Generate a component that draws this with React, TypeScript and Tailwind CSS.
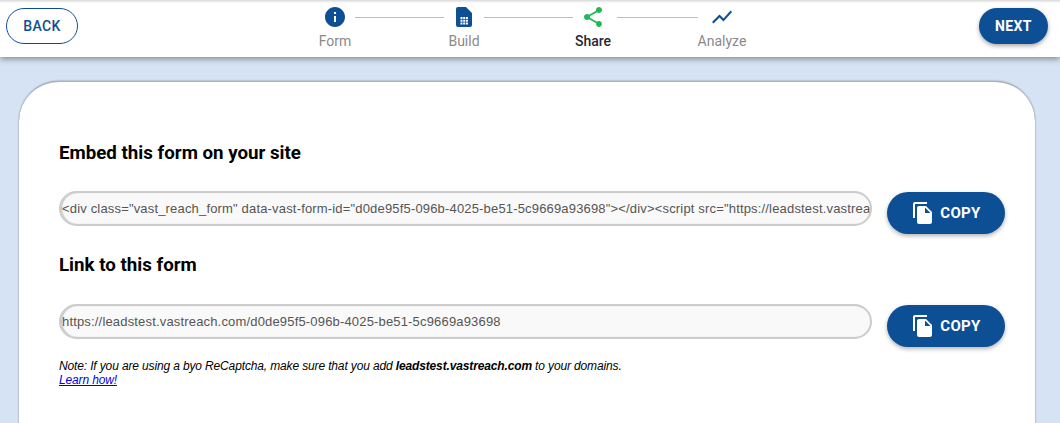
import React from 'react';
import { MdInfo, MdShare, MdShowChart, MdFileCopy } from 'react-icons/md';

const BuildIcon = () => (
  <svg width="24" height="24" viewBox="0 0 24 24" fill="#0d4f95">
    <path
      fillRule="evenodd"
      d="M6 2h8l6 6v12a2 2 0 0 1-2 2H6a2 2 0 0 1-2-2V4a2 2 0 0 1 2-2zM8.5 12v2h2v-2zM11.2 12v2h2v-2zM13.9 12v2h2v-2zM8.5 14.7v2h2v-2zM11.2 14.7v2h2v-2zM13.9 14.7v2h2v-2zM8.5 17.4v2h2v-2zM11.2 17.4v2h2v-2zM13.9 17.4v2h2v-2z"
    />
  </svg>
);

const Connector = ({ className }: { className: string }) => (
  <div className={`h-px bg-[#bdbdbd] ${className}`}></div>
);

const steps = [
  { label: 'Form', active: false },
  { label: 'Build', active: false },
  { label: 'Share', active: true },
  { label: 'Analyze', active: false },
];

function CopyRow({ value }: { value: string }) {
  return (
    <div className="flex items-start">
      <input
        readOnly
        value={value}
        className="w-[813px] h-[35px] rounded-[18px] border-2 border-[#cccccc] bg-[#f9f9f9] pl-[1px] pr-0 text-[13px] tracking-[0.17px] text-[#555555] outline-none shadow-[inset_1px_0_1px_rgba(0,0,0,0.25)] font-['Liberation_Sans',sans-serif]"
      />
      <button className="ml-[15px] mt-[1px] w-[118px] h-[42px] rounded-[21px] bg-[#0d4f95] text-white flex items-center justify-center gap-[5px] text-[15px] font-bold tracking-[0.3px] shadow-[0_2px_4px_rgba(0,0,0,0.3)]">
        <MdFileCopy size={24} />
        COPY
      </button>
    </div>
  );
}

export default function App() {
  return (
    <div className="h-[423px] overflow-hidden bg-[#d5e3f5] font-['Roboto',sans-serif]">
      {/* Header */}
      <div className="h-[57px] bg-white flex items-start justify-between pl-[6px] pr-[12px] pt-[8px] shadow-[0_2px_6px_rgba(0,0,0,0.4),inset_0_3px_3px_-2px_rgba(0,0,0,0.2)]">
        <button className="w-[72px] h-[36px] rounded-[18px] border border-[#0d4f95] text-[#0d4f95] text-[14px] font-medium tracking-[0.4px]">
          BACK
        </button>

        <div className="w-[516px] -mt-[3px]">
          <div className="flex items-center px-[52px]">
            <MdInfo size={24} className="text-[#0d4f95] shrink-0" />
            <Connector className="w-[89px] ml-[8px] mr-[8px]" />
            <BuildIcon />
            <Connector className="w-[89px] ml-[8px] mr-[8px]" />
            <MdShare size={24} className="text-[#1db954] shrink-0" />
            <Connector className="w-[81px] ml-[12px] mr-[12px]" />
            <MdShowChart size={24} className="text-[#0d4f95] shrink-0" />
          </div>
          <div className="grid grid-cols-4 mt-[2px] text-center text-[14px] leading-[20px]">
            {steps.map((step) => (
              <span key={step.label} className={step.active ? 'font-medium text-[#1f2933]' : 'text-[#8a8a8a]'}>
                {step.label}
              </span>
            ))}
          </div>
        </div>

        <button className="w-[69px] h-[36px] rounded-[18px] bg-[#0d4f95] text-white text-[14px] font-bold tracking-[0.4px] shadow-[0_2px_4px_rgba(0,0,0,0.35)]">
          NEXT
        </button>
      </div>

      {/* Card */}
      <div className="ml-[19px] mt-[24px] w-[1016px] h-[420px] rounded-[40px] bg-white border-t border-[#b0b0b0] pl-[40px] pt-[59px] shadow-[0_0_2px_rgba(0,0,0,0.45)]">
        <h2 className="text-[18.72px] leading-[24px] font-bold text-black">Embed this form on your site</h2>
        <div className="mt-[26px]">
          <CopyRow value={'<div class="vast_reach_form" data-vast-form-id="d0de95f5-096b-4025-be51-5c9669a93698"></div><script src="https://leadstest.vastreach.com/embed.js"></script>'} />
        </div>
        <h2 className="mt-[19px] text-[18.72px] leading-[24px] font-bold text-black">Link to this form</h2>
        <div className="mt-[27px]">
          <CopyRow value="https://leadstest.vastreach.com/d0de95f5-096b-4025-be51-5c9669a93698" />
        </div>
        <p className="mt-[12px] text-[12px] leading-[14px] tracking-[-0.14px] italic text-black font-['Liberation_Sans',sans-serif]">
          Note: If you are using a byo ReCaptcha, make sure that you add <b>leadstest.vastreach.com</b> to your domains.
          <br />
          <a href="#" className="text-[#0000ee] underline">Learn how!</a>
        </p>
      </div>
    </div>
  );
}
